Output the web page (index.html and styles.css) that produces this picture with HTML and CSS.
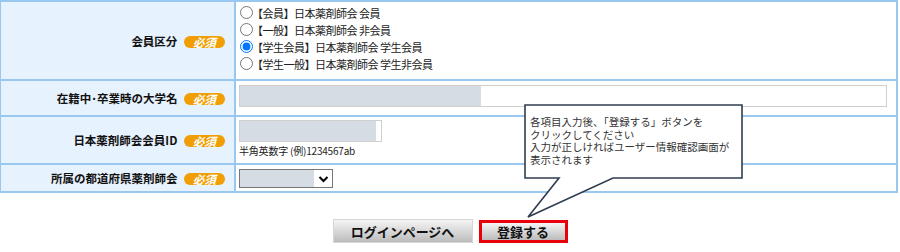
FILE: index.html
```html
<!DOCTYPE html>
<html lang="ja">

<head>
    <meta charset="UTF-8" />
    <meta name="viewport" content="width=device-width, initial-scale=1.0" />
    <title>会員登録</title>
    <link rel="stylesheet" href="styles.css">
</head>

<body>
    <table class="form">
        <tr class="row-kind">
            <th>会員区分 <span class="req">必須</span></th>
            <td>
                <label class="opt"><input type="radio" name="kind"><span>【会員】日本薬剤師会 会員</span></label>
                <label class="opt"><input type="radio" name="kind"><span>【一般】日本薬剤師会 非会員</span></label>
                <label class="opt"><input type="radio" name="kind" checked><span>【学生会員】日本薬剤師会 学生会員</span></label>
                <label class="opt"><input type="radio" name="kind"><span>【学生一般】日本薬剤師会 学生非会員</span></label>
            </td>
        </tr>
        <tr class="row-univ">
            <th>在籍中･卒業時の大学名 <span class="req">必須</span></th>
            <td>
                <div class="field wide"><span class="fill"></span></div>
            </td>
        </tr>
        <tr class="row-id">
            <th>日本薬剤師会会員ID <span class="req">必須</span></th>
            <td>
                <div class="field short"><span class="fill"></span></div>
                <p class="hint">半角英数字 (例)1234567ab</p>
            </td>
        </tr>
        <tr class="row-pref">
            <th>所属の都道府県薬剤師会 <span class="req">必須</span></th>
            <td>
                <div class="select">
                    <span class="fill"></span>
                    <span class="arrow">
                        <svg width="11" height="8" viewBox="0 0 11 8"><path d="M1.5 2 L5.5 6 L9.5 2" fill="none" stroke="#000" stroke-width="2"/></svg>
                    </span>
                </div>
            </td>
        </tr>
    </table>

    <div class="actions">
        <button class="btn btn-back">ログインページへ</button>
        <span class="btn-mark"><button class="btn btn-submit">登録する</button></span>
    </div>

    <!-- 吹き出し -->
    <div class="callout">
        <svg class="callout-shape" width="222" height="116" viewBox="0 0 222 116">
            <path d="M1 1 H218 V74 H89 L4 113 L35 74 H1 Z" fill="#fff" stroke="#2f3c50" stroke-width="1.6"/>
        </svg>
        <div class="callout-text">
            <div>各項目入力後、「登録する」ボタンを</div>
            <div>クリックしてください</div>
            <div>入力が正しければユーザー情報確認画面が</div>
            <div>表示されます</div>
        </div>
    </div>
</body>

</html>
```

FILE: styles.css
```css
:root{
    --line: #98c8f0;
    --label-bg: #e6f2fd;
    --badge: #f19e05;
    --redact: #d5dce4;
}

body{
    margin: 0;
    font-family: "Noto Sans CJK JP", "Noto Sans", sans-serif;
    color: #222;
    position: relative;
}

.form{
    width: 898px;
    border-collapse: separate;
    border-spacing: 0;
    border-top: 2px solid var(--line);
    border-left: 1px solid var(--line);
}
.form th,
.form td{
    box-sizing: border-box;
    border-right: 2px solid var(--line);
    border-bottom: 2px solid var(--line);
}
.form th{
    width: 235px;
    padding: 0 9px 0 0;
    text-align: right;
    vertical-align: middle;
    background-color: var(--label-bg);
    font-size: 11.5px;
    font-weight: bold;
    color: #111;
    white-space: nowrap;
}
.form td{
    padding: 4px 3px 0;
    vertical-align: top;
    font-size: 11px;
}

.req{
    display: inline-block;
    width: 41px;
    height: 12px;
    margin-left: 4px;
    border-radius: 7px;
    background-color: var(--badge);
    color: #fff;
    font-size: 11.5px;
    font-style: italic;
    font-weight: bold;
    line-height: 12px;
    text-align: center;
    vertical-align: -1px;
}

.row-kind th,
.row-kind td{
    height: 79px;
}
.row-kind td{
    padding-top: 2px;
}
.opt{
    display: flex;
    align-items: center;
    height: 17.1px;
}
.opt input{
    width: 13px;
    height: 13px;
    margin: 0 0 0 1px;
}
.opt span{
    margin-left: -1px;
    letter-spacing: -0.5px;
}

.row-univ th,
.row-univ td{
    height: 36px;
}
.row-id th,
.row-id td{
    height: 48px;
}
.row-id td{
    padding-top: 3px;
}
.row-pref th,
.row-pref td{
    height: 28px;
}

.field{
    box-sizing: border-box;
    display: flex;
    height: 22px;
    border: 1px solid #cfcfcf;
    background-color: #fff;
}
.field .fill{
    background-color: var(--redact);
}
.wide{
    width: 648px;
}
.wide .fill{
    width: 241px;
}
.short{
    width: 143px;
}
.short .fill{
    width: 136px;
}
.hint{
    margin: 2px 0 0;
    font-size: 10px;
    letter-spacing: -0.2px;
    line-height: 14px;
}

.select{
    box-sizing: border-box;
    display: flex;
    width: 94px;
    height: 19px;
    border: 1px solid #767676;
    background-color: #fff;
}
.select .fill{
    width: 74px;
    background-color: var(--redact);
}
.select .arrow{
    flex: 1;
    display: flex;
    align-items: center;
    justify-content: center;
}

.actions{
    display: flex;
    justify-content: center;
    align-items: center;
    gap: 6px;
    margin-top: 26px;
}
.btn{
    font-family: "Noto Sans CJK JP", sans-serif;
    font-size: 13px;
    font-weight: bold;
    color: #111;
    background: linear-gradient(#f5f5f5, #bcbcbc);
    border: 1px solid #d6d6d6;
    padding: 0;
}
.btn-back{
    width: 140px;
    height: 24px;
}
.btn-mark{
    display: inline-flex;
    border: 3px solid #e8000b;
}
.btn-submit{
    width: 83px;
    height: 17px;
    border: none;
    line-height: 17px;
}

.callout{
    position: absolute;
    left: 524px;
    top: 104px;
    width: 222px;
    height: 116px;
}
.callout-shape{
    position: absolute;
    left: 0;
    top: 0;
}
.callout-text{
    position: relative;
    padding: 12px 0 0 6px;
    font-size: 10.5px;
    color: #333;
    white-space: nowrap;
}
.callout-text div{
    height: 12.5px;
    line-height: 12.5px;
}
```
